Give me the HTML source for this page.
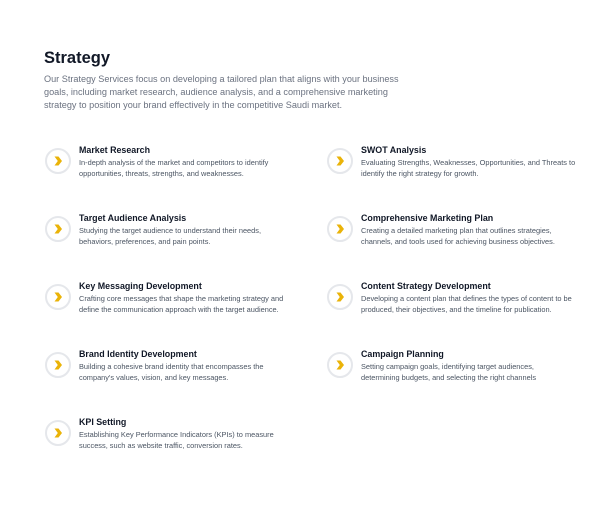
<!DOCTYPE html>
<html><head><meta charset="utf-8"><style>
body{margin:0;background:#fff;width:614px;height:508px;position:relative;font-family:"Liberation Sans",sans-serif;overflow:hidden}
h1{position:absolute;left:44px;top:49px;margin:0;font-size:16.5px;font-weight:bold;color:#111827}
.p{position:absolute;left:44px;top:73px;font-size:9.15px;line-height:13px;color:#6b7280;white-space:nowrap}
.it{position:absolute;white-space:nowrap}
.ic{position:absolute;left:-34px;top:-2px;width:22px;height:22px;border:2.5px solid #e5e7eb;border-radius:50%;background:#fff}
.ic svg{position:absolute;left:5px;top:5px}
.t{font-size:8.9px;font-weight:bold;color:#111827;line-height:12px;margin-top:-6px}
.d{font-size:7.4px;color:#4b5563;line-height:11px;margin-top:0.5px}
</style></head><body>
<h1>Strategy</h1>
<div class="p">Our Strategy Services focus on developing a tailored plan that aligns with your business<br>goals, including market research, audience analysis, and a comprehensive marketing<br>strategy to position your brand effectively in the competitive Saudi market.</div>

<div class="it" style="left:79px;top:150px"><div class="ic"><svg width="12" height="12" viewBox="0 0 12 12"><path d="M2.5 1.5h4l3.5 4.5-3.5 4.5h-4l3.3-4.5z" fill="#eab308"/></svg></div><div class="t">Market Research</div><div class="d">In-depth analysis of the market and competitors to identify<br>opportunities, threats, strengths, and weaknesses.</div></div>
<div class="it" style="left:361px;top:150px"><div class="ic"><svg width="12" height="12" viewBox="0 0 12 12"><path d="M2.5 1.5h4l3.5 4.5-3.5 4.5h-4l3.3-4.5z" fill="#eab308"/></svg></div><div class="t">SWOT Analysis</div><div class="d">Evaluating Strengths, Weaknesses, Opportunities, and Threats to<br>identify the right strategy for growth.</div></div>

<div class="it" style="left:79px;top:218px"><div class="ic"><svg width="12" height="12" viewBox="0 0 12 12"><path d="M2.5 1.5h4l3.5 4.5-3.5 4.5h-4l3.3-4.5z" fill="#eab308"/></svg></div><div class="t">Target Audience Analysis</div><div class="d">Studying the target audience to understand their needs,<br>behaviors, preferences, and pain points.</div></div>
<div class="it" style="left:361px;top:218px"><div class="ic"><svg width="12" height="12" viewBox="0 0 12 12"><path d="M2.5 1.5h4l3.5 4.5-3.5 4.5h-4l3.3-4.5z" fill="#eab308"/></svg></div><div class="t">Comprehensive Marketing Plan</div><div class="d">Creating a detailed marketing plan that outlines strategies,<br>channels, and tools used for achieving business objectives.</div></div>

<div class="it" style="left:79px;top:286px"><div class="ic"><svg width="12" height="12" viewBox="0 0 12 12"><path d="M2.5 1.5h4l3.5 4.5-3.5 4.5h-4l3.3-4.5z" fill="#eab308"/></svg></div><div class="t">Key Messaging Development</div><div class="d">Crafting core messages that shape the marketing strategy and<br>define the communication approach with the target audience.</div></div>
<div class="it" style="left:361px;top:286px"><div class="ic"><svg width="12" height="12" viewBox="0 0 12 12"><path d="M2.5 1.5h4l3.5 4.5-3.5 4.5h-4l3.3-4.5z" fill="#eab308"/></svg></div><div class="t">Content Strategy Development</div><div class="d">Developing a content plan that defines the types of content to be<br>produced, their objectives, and the timeline for publication.</div></div>

<div class="it" style="left:79px;top:354px"><div class="ic"><svg width="12" height="12" viewBox="0 0 12 12"><path d="M2.5 1.5h4l3.5 4.5-3.5 4.5h-4l3.3-4.5z" fill="#eab308"/></svg></div><div class="t">Brand Identity Development</div><div class="d">Building a cohesive brand identity that encompasses the<br>company's values, vision, and key messages.</div></div>
<div class="it" style="left:361px;top:354px"><div class="ic"><svg width="12" height="12" viewBox="0 0 12 12"><path d="M2.5 1.5h4l3.5 4.5-3.5 4.5h-4l3.3-4.5z" fill="#eab308"/></svg></div><div class="t">Campaign Planning</div><div class="d">Setting campaign goals, identifying target audiences,<br>determining budgets, and selecting the right channels</div></div>

<div class="it" style="left:79px;top:422px"><div class="ic"><svg width="12" height="12" viewBox="0 0 12 12"><path d="M2.5 1.5h4l3.5 4.5-3.5 4.5h-4l3.3-4.5z" fill="#eab308"/></svg></div><div class="t">KPI Setting</div><div class="d">Establishing Key Performance Indicators (KPIs) to measure<br>success, such as website traffic, conversion rates.</div></div>
</body></html>
